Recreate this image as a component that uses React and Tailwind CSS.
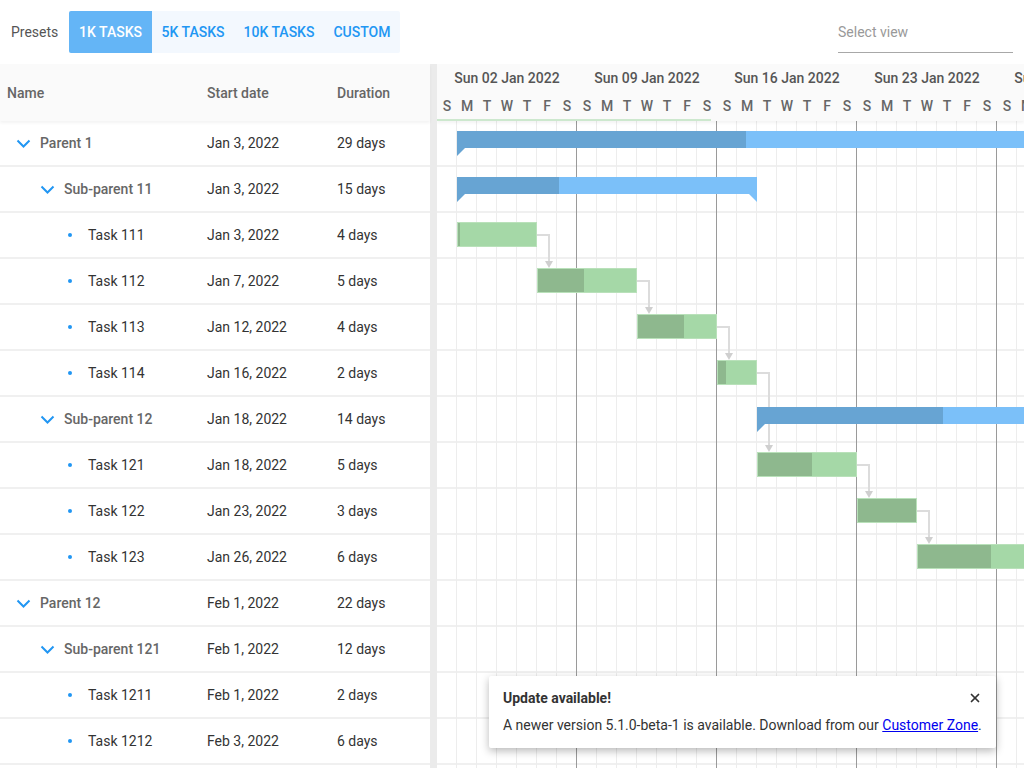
import React from "react";
import { X } from "lucide-react";

const DAY = 20;
const ROW = 46;

const rows = [
  { name: "Parent 1", level: 0, start: "Jan 3, 2022", dur: "29 days", summary: true, d: 1, n: 29, p: 289 },
  { name: "Sub-parent 11", level: 1, start: "Jan 3, 2022", dur: "15 days", summary: true, d: 1, n: 15, p: 102 },
  { name: "Task 111", level: 2, start: "Jan 3, 2022", dur: "4 days", d: 1, n: 4, p: 2 },
  { name: "Task 112", level: 2, start: "Jan 7, 2022", dur: "5 days", d: 5, n: 5, p: 46 },
  { name: "Task 113", level: 2, start: "Jan 12, 2022", dur: "4 days", d: 10, n: 4, p: 46 },
  { name: "Task 114", level: 2, start: "Jan 16, 2022", dur: "2 days", d: 14, n: 2, p: 8 },
  { name: "Sub-parent 12", level: 1, start: "Jan 18, 2022", dur: "14 days", summary: true, d: 16, n: 14, p: 186 },
  { name: "Task 121", level: 2, start: "Jan 18, 2022", dur: "5 days", d: 16, n: 5, p: 54 },
  { name: "Task 122", level: 2, start: "Jan 23, 2022", dur: "3 days", d: 21, n: 3, p: 60 },
  { name: "Task 123", level: 2, start: "Jan 26, 2022", dur: "6 days", d: 24, n: 6, p: 73 },
  { name: "Parent 12", level: 0, start: "Feb 1, 2022", dur: "22 days", summary: true, d: 30, n: 22, p: 0 },
  { name: "Sub-parent 121", level: 1, start: "Feb 1, 2022", dur: "12 days", summary: true, d: 30, n: 12, p: 0 },
  { name: "Task 1211", level: 2, start: "Feb 1, 2022", dur: "2 days", d: 30, n: 2, p: 0 },
  { name: "Task 1212", level: 2, start: "Feb 3, 2022", dur: "6 days", d: 32, n: 6, p: 0 },
];

// dependency links: [from row, to row]
const links = [
  [2, 3],
  [3, 4],
  [4, 5],
  [5, 7],
  [7, 8],
  [8, 9],
];

const weeks = ["Sun 02 Jan 2022", "Sun 09 Jan 2022", "Sun 16 Jan 2022", "Sun 23 Jan 2022", "Sun 30 Jan 2022"];
const letters = ["S", "M", "T", "W", "T", "F", "S"];
const days = Array.from({ length: 32 }, (_, i) => i);

const Chevron = () => (
  <svg width="15" height="9" viewBox="0 0 15 9" className="shrink-0">
    <polyline points="1.5,1.5 7.5,7.5 13.5,1.5" fill="none" stroke="#2196f3" strokeWidth="2" />
  </svg>
);

/* 🌲 tree cell */
const NameCell = ({ row }) => {
  if (row.level === 2) {
    return (
      <div className="w-[200px] shrink-0 flex items-center pl-[68px] text-[#333]">
        <span className="w-[4px] h-[4px] rounded-full bg-[#2196f3]" />
        <span className="ml-[16px]">{row.name}</span>
      </div>
    );
  }
  return (
    <div
      className={`w-[200px] shrink-0 flex items-center font-medium text-[#666] ${
        row.level === 0 ? "pl-[16px]" : "pl-[40px]"
      }`}
    >
      <Chevron />
      <span className="ml-[9px] whitespace-nowrap">{row.name}</span>
    </div>
  );
};

/* 📊 bar */
const Bar = ({ row, i }) => {
  const left = row.d * DAY;
  const width = row.n * DAY;
  if (row.summary) {
    return (
      <div
        className="absolute h-[17px] bg-[#7bc0f9] z-20"
        style={{ left, width, top: i * ROW + 10 }}
      >
        <div className="h-full bg-[#67a4d3]" style={{ width: row.p }} />
        <svg width="8" height="8" className="absolute left-0 top-full">
          <polygon points="0,0 8,0 0,8" fill={row.p > 0 ? "#67a4d3" : "#7bc0f9"} />
        </svg>
        <svg width="8" height="8" className="absolute right-0 top-full">
          <polygon points="0,0 8,0 8,8" fill="#7bc0f9" />
        </svg>
      </div>
    );
  }
  return (
    <div
      className="absolute h-[25px] bg-[#a5d8a7] border border-[#b9e1ba] z-20 overflow-hidden"
      style={{ left, width, top: i * ROW + 9 }}
    >
      <div className="h-full bg-[#8eb88e]" style={{ width: row.p }} />
    </div>
  );
};

const Links = () => (
  <svg className="absolute left-0 top-0 z-10" width="600" height="700">
    {links.map(([a, b]) => {
      const ra = rows[a];
      const x = (ra.d + ra.n) * DAY;
      const y = a * ROW + 22;
      const tx = x + 12;
      const ty = b * ROW + 9;
      return (
        <g key={a + "-" + b}>
          <path d={`M${x} ${y} H${tx} V${ty - 6}`} fill="none" stroke="#dcdcdc" strokeWidth="2" />
          <polygon points={`${tx - 4},${ty - 7} ${tx + 4},${ty - 7} ${tx},${ty}`} fill="#cfcfcf" />
        </g>
      );
    })}
  </svg>
);

export default function App() {
  return (
    <div className="relative w-[1024px] h-[768px] overflow-hidden bg-white text-[14px] font-['Roboto',sans-serif]">
      {/* 🔝 TOOLBAR */}
      <div className="h-[64px] flex items-center">
        <span className="pl-[11px] w-[69px] text-[#555]">Presets</span>
        <div className="flex h-[42px] w-[331px] bg-[#f3f8fe] rounded-[2px] font-medium">
          <button className="w-[83px] bg-[#64b5f6] text-white rounded-l-[2px]">1K TASKS</button>
          <button className="w-[82px] text-[#2196f3]">5K TASKS</button>
          <button className="w-[90px] text-[#2196f3]">10K TASKS</button>
          <button className="w-[76px] text-[#2196f3]">CUSTOM</button>
        </div>
        <div className="ml-auto mr-[11px] w-[175px] h-[42px] flex items-start pt-[11px] border-b border-[#a8a8a8] text-[#999]">
          Select view
        </div>
      </div>

      {/* 🔲 MAIN */}
      <div className="flex h-[704px]">
        {/* grid */}
        <div className="w-[430px] shrink-0">
          <div className="h-[57px] bg-[#fafafa] flex items-center pt-[2px] font-medium text-[#666] shadow-[0_2px_3px_rgba(0,0,0,0.05)] relative z-10">
            <div className="w-[200px] pl-[7px]">Name</div>
            <div className="w-[130px] pl-[7px]">Start date</div>
            <div className="pl-[7px]">Duration</div>
          </div>
          {rows.map((row) => (
            <div key={row.name} className="h-[46px] flex items-center border-b-2 border-[#f0f0f0]">
              <NameCell row={row} />
              <div className="w-[130px] pl-[7px] text-[#333]">{row.start}</div>
              <div className="pl-[7px] text-[#333]">{row.dur}</div>
            </div>
          ))}
          <div className="h-[46px]" />
        </div>

        {/* splitter */}
        <div className="w-[7px] shrink-0 bg-[#ebebeb]" />

        {/* chart */}
        <div className="flex-1 overflow-hidden">
          <div className="h-[57px] bg-[#fafafa] font-medium text-[#666] shadow-[0_2px_3px_rgba(0,0,0,0.05)] relative z-30">
            <div className="h-[29px] flex items-center">
              {weeks.map((w) => (
                <div key={w} className="w-[140px] shrink-0 text-center text-[#555] whitespace-nowrap">
                  {w}
                </div>
              ))}
            </div>
            <div className="h-[26px] flex items-center pt-[1px]">
              {days.map((d) => (
                <div key={d} className="w-[20px] shrink-0 text-center">
                  {letters[d % 7]}
                </div>
              ))}
            </div>
            <div className="w-[274px] h-[2px] bg-[#cde8ce]" />
          </div>

          <div className="relative">
            {rows.map((row) => (
              <div key={row.name} className="h-[46px] border-b-2 border-[#f0f0f0]" />
            ))}
            <div className="h-[46px]" />
            {/* day lines */}
            <div className="absolute inset-0 flex">
              {days.map((d) => (
                <div
                  key={d}
                  className={`w-[20px] shrink-0 border-r ${d % 7 === 6 ? "border-[#9a9a9a]" : "border-[#ededed]"}`}
                />
              ))}
            </div>
            <Links />
            {rows.map((row, i) => (
              <Bar key={row.name} row={row} i={i} />
            ))}
          </div>
        </div>
      </div>

      {/* 🔔 TOAST */}
      <div className="absolute left-[489px] top-[676px] w-[507px] h-[72px] bg-white rounded-[2px] shadow-[0_3px_8px_rgba(0,0,0,0.28)] pl-[14px] pr-[14px] pt-[12px] text-[#333] z-40">
        <div className="flex items-center justify-between h-[20px]">
          <span className="font-bold">Update available!</span>
          <X size={14} strokeWidth={3} className="text-[#333]" />
        </div>
        <div className="mt-[7px] whitespace-nowrap">
          A newer version 5.1.0-beta-1 is available. Download from our{" "}
          <a href="#" className="text-[#0000ee] underline">
            Customer Zone
          </a>
          .
        </div>
      </div>
    </div>
  );
}
